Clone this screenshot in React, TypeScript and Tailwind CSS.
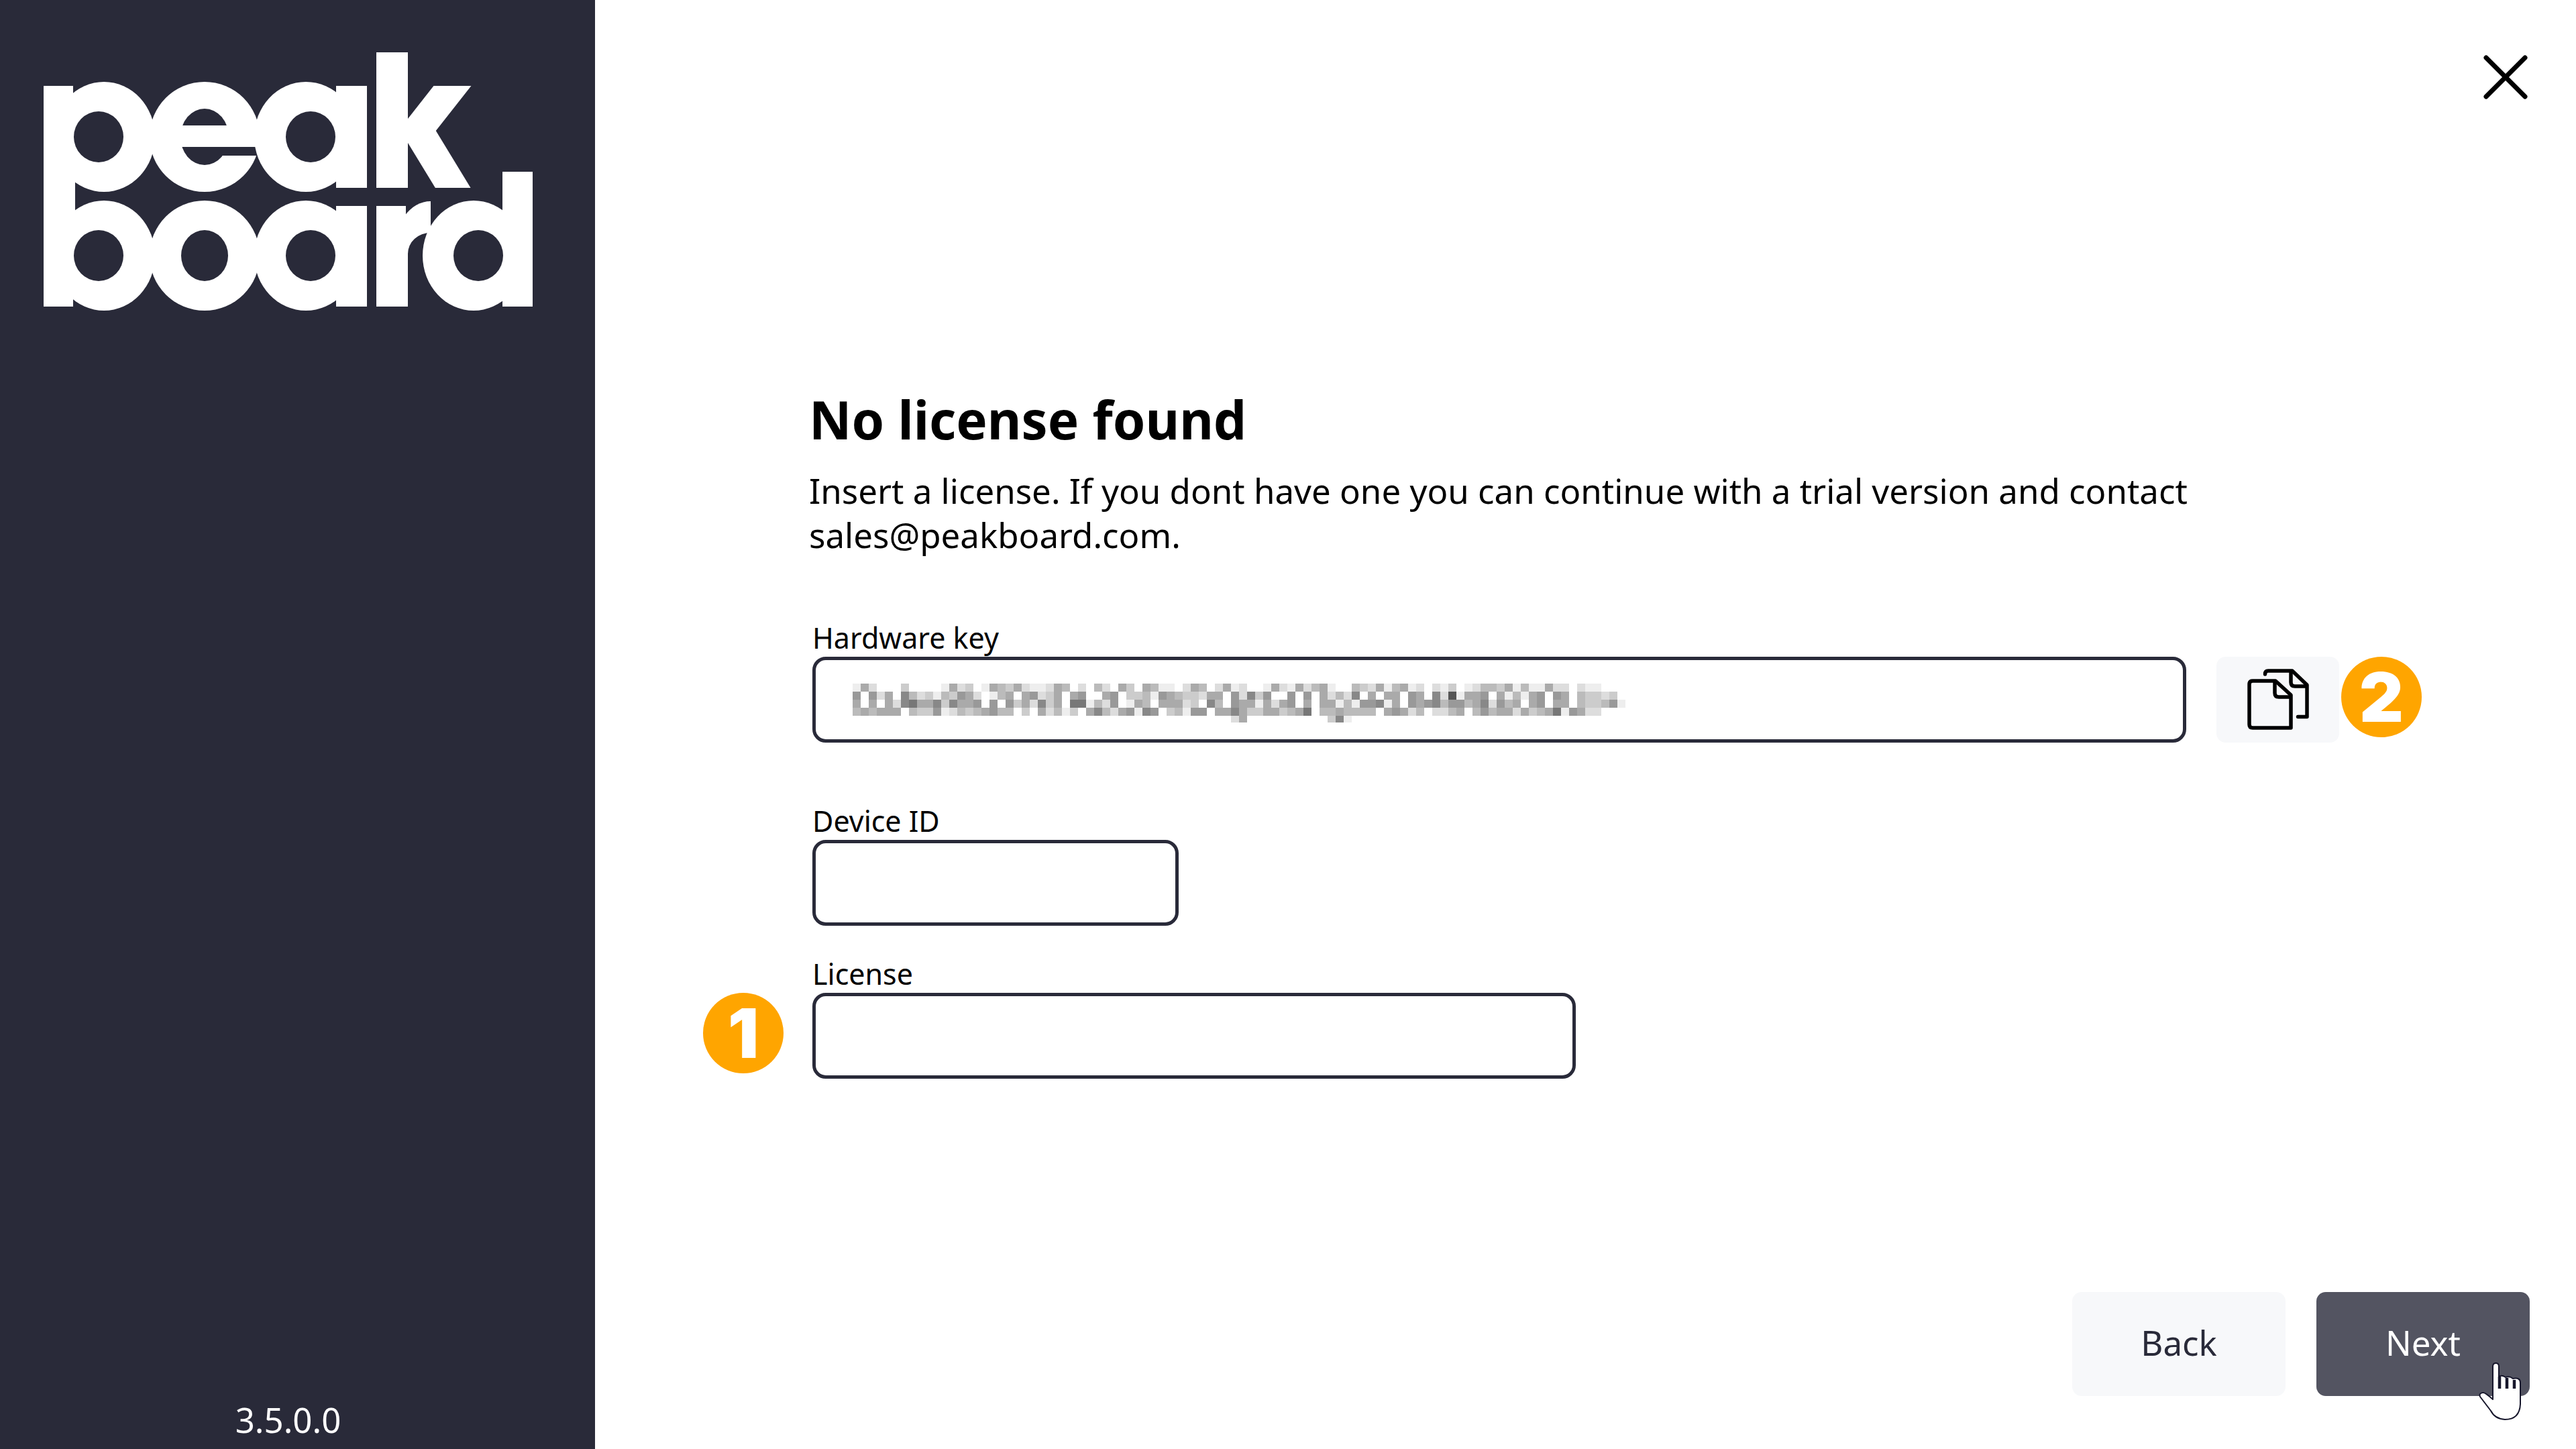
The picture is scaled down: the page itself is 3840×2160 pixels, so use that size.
const KEY_ROWS = [
  "feadfffcffffeadcfeabcadeedabfdfbdfacfabeefdabfdaedffeadeadbaeffbcdaebaedfdecfedbbcaebeeaddfdeefff",
  "f9f9daf8bdcebc9adfebafa9dcafa9ffa9fccbe9abccdaaf9d8c9ff9f9fadbd8fafaaf9af8d5eaa9faebea9f9afbccdcf",
  "fafafad87aa8c8aa9f9f9cad8caf77ebd9feabfaaadcf8bf9aaeada9fafaaebe998eaf9a98b99ba8d9bafa9faafbccb9e",
  "fbabaaafbcc9edbcba9bbfcfadbecfa8bda9e89fcbe99faa8accaacba7fbbabbbbfa9adbfddbafb9baadacba7e9addfff",
  "ffffffffffffffffffffffffffffffffffffffffffffffffdaffffffffffc8e",
];

const FIELD =
  "h-32 rounded-[20px] border-[5px] border-[#292a39] bg-white px-14 text-[51px] text-[#292a39] outline-none";
const LABEL = "text-[43px] leading-[56px]";

function Logo() {
  return (
    <svg
      role="img"
      aria-label="Peakboard"
      viewBox="0 0 729 385"
      className="w-[729px] max-w-full fill-white"
    >
      <defs>
        <clipPath id="arms">
          <rect x="530" y="50" width="120" height="152" />
        </clipPath>
        <clipPath id="shoulder">
          <rect x="496" y="222" width="81" height="78" />
        </clipPath>
      </defs>

      {/* upper row */}
      <ellipse cx="240" cy="126" rx="82" ry="82" />
      <ellipse cx="240" cy="126" rx="36" ry="42" className="fill-[#292a39]" />
      <rect x="200" y="109" width="118" height="32" />
      <rect x="240" y="141" width="84" height="13" className="fill-[#292a39]" />
      <rect x="0" y="50" width="44" height="329" />
      <rect x="0" y="180" width="47" height="70" />
      <ellipse cx="90" cy="126" rx="76" ry="82" />
      <ellipse cx="82" cy="126" rx="37" ry="38" className="fill-[#292a39]" />
      <ellipse cx="391" cy="126" rx="77" ry="82" />
      <rect x="436" y="50" width="46" height="152" />
      <ellipse cx="398" cy="126" rx="37" ry="38" className="fill-[#292a39]" />
      <rect x="496" y="0" width="47" height="202" />
      <rect x="540" y="106" width="30" height="25" />
      <g clipPath="url(#arms)" className="stroke-white">
        <line x1="556" y1="118" x2="622" y2="34" strokeWidth="44" />
        <line x1="556" y1="113" x2="623" y2="223" strokeWidth="45" />
      </g>

      {/* lower row */}
      <ellipse cx="90" cy="303" rx="76" ry="82" />
      <ellipse cx="82" cy="303" rx="37" ry="38" className="fill-[#292a39]" />
      <ellipse cx="240" cy="303" rx="82" ry="82" />
      <ellipse cx="240" cy="303" rx="35" ry="38" className="fill-[#292a39]" />
      <ellipse cx="391" cy="303" rx="77" ry="82" />
      <rect x="436" y="229" width="46" height="150" />
      <ellipse cx="398" cy="303" rx="37" ry="38" className="fill-[#292a39]" />
      <g clipPath="url(#shoulder)">
        <ellipse cx="577" cy="299" rx="56" ry="77" />
        <ellipse cx="577" cy="300" rx="34" ry="31" className="fill-[#292a39]" />
      </g>
      <rect x="496" y="229" width="44" height="150" />
      <rect x="496" y="290" width="47" height="89" />
      <ellipse cx="641" cy="303" rx="76" ry="82" />
      <rect x="684" y="178" width="45" height="201" />
      <ellipse cx="648" cy="303" rx="37" ry="38" className="fill-[#292a39]" />
    </svg>
  );
}

function CloseIcon() {
  return (
    <svg viewBox="0 0 66 66" className="size-[66px] fill-none stroke-black" strokeWidth="7" strokeLinecap="round">
      <path d="M4 4 62 62M62 4 4 62" />
    </svg>
  );
}

function CopyIcon() {
  return (
    <svg
      viewBox="0 0 92 92"
      className="size-[92px] fill-none stroke-black"
      strokeWidth="5.5"
      strokeLinecap="round"
      strokeLinejoin="round"
    >
      <path d="M8 18H42L65 39V88H8Q3 88 3 83V23Q3 18 8 18Z" />
      <path d="M41 19V36Q41 42 47 42H64" />
      <path d="M26.500 8Q26.500 3 31 3H67L89 24V71.500H75.500" />
      <path d="M65 4V20Q65 26 71 26H88" />
    </svg>
  );
}

function HandPointer() {
  return (
    <svg
      viewBox="-1 -1 64 87"
      aria-hidden="true"
      className="pointer-events-none absolute -bottom-[37px] right-3 h-[87px] w-16 fill-white stroke-[#16162b]"
      strokeWidth="2"
      strokeLinejoin="round"
      strokeLinecap="round"
    >
      <path d="M20 54V5Q20 0 24.500 0T29 5V20Q33 17 39 21Q45 19 50 23Q61 21 61 29V61Q60 84 38 84Q23 83 17 71L1 50Q-1 45 5 44Q8 43 20 54Z" />
      <path d="M30 20V38M41 22V38M52 25V38" strokeWidth="4.500" strokeLinecap="butt" />
    </svg>
  );
}

function PixelatedKey() {
  return (
    <svg
      viewBox="0 0 1164 58"
      aria-hidden="true"
      shapeRendering="crispEdges"
      className="pointer-events-none absolute left-12 top-10 w-[1164px]"
    >
      {KEY_ROWS.map((row, y) =>
        row
          .split("")
          .map((c, x) =>
            c === "f" ? null : (
              <rect key={`${x}-${y}`} x={x * 12} y={y * 12} width="12" height="12" fill={`#${c}${c}${c}`} />
            ),
          ),
      )}
    </svg>
  );
}

function Badge({ n }: { n: number }) {
  return (
    <span className="flex size-[120px] shrink-0 items-center justify-center rounded-full bg-[#ffa500] font-['Inter',sans-serif] text-[102px] leading-none font-black text-white">
      {n}
    </span>
  );
}

export default function App() {
  return (
    <div className="flex min-h-screen bg-white font-['Noto_Sans',sans-serif] text-black">
      <aside className="flex w-[887px] shrink-0 flex-col items-center justify-between bg-[#292a39] pt-[78px] pr-7 text-white">
        <Logo />
        <p className="text-[51px] leading-[88px]">3.5.0.0</p>
      </aside>

      <main className="flex grow flex-col">
        <header className="flex justify-end pt-[82px] pr-[72px]">
          <button type="button" aria-label="Close">
            <CloseIcon />
          </button>
        </header>

        <form className="mt-[424px] flex flex-col pr-[230px] pl-[319px]">
          <h1 className="text-[78px] leading-[106px] font-bold">No license found</h1>
          <p className="mt-5 max-w-[2160px] text-[51px] leading-[66px]">
            Insert a license. If you dont have one you can continue with a trial version and contact
            sales@peakboard.com.
          </p>

          <div className="mt-[93px] flex flex-col pl-[5px]">
            <label htmlFor="hardware" className={LABEL}>
              Hardware key
            </label>
            <div className="flex items-start">
              <div className="relative grow">
                <input id="hardware" readOnly className={`${FIELD} block w-full`} />
                <PixelatedKey />
              </div>
              <button
                type="button"
                aria-label="Copy hardware key"
                className="mr-[3px] ml-[45px] flex h-32 w-[183px] items-center justify-center rounded-[14px] bg-[#f7f8fa]"
              >
                <CopyIcon />
              </button>
              <Badge n={2} />
            </div>

            <label htmlFor="device" className={`${LABEL} mt-[89px]`}>
              Device ID
            </label>
            <input id="device" className={`${FIELD} w-[546px]`} />

            <label htmlFor="license" className={`${LABEL} mt-11`}>
              License
            </label>
            <div className="relative w-[1138px]">
              <input id="license" className={`${FIELD} block w-full`} />
              <div className="absolute top-0 -left-[163px]">
                <Badge n={1} />
              </div>
            </div>
          </div>
        </form>

        <footer className="mt-auto flex justify-end gap-[46px] pr-[69px] pb-[79px]">
          <button type="button" className="h-[155px] w-[318px] rounded-[14px] bg-[#f7f8fa] pb-1 text-[51px] text-[#292a39]">
            Back
          </button>
          <button type="button" className="relative h-[155px] w-[318px] rounded-[14px] bg-[#535461] pb-1 text-[51px] text-white">
            Next
            <HandPointer />
          </button>
        </footer>
      </main>
    </div>
  );
}
